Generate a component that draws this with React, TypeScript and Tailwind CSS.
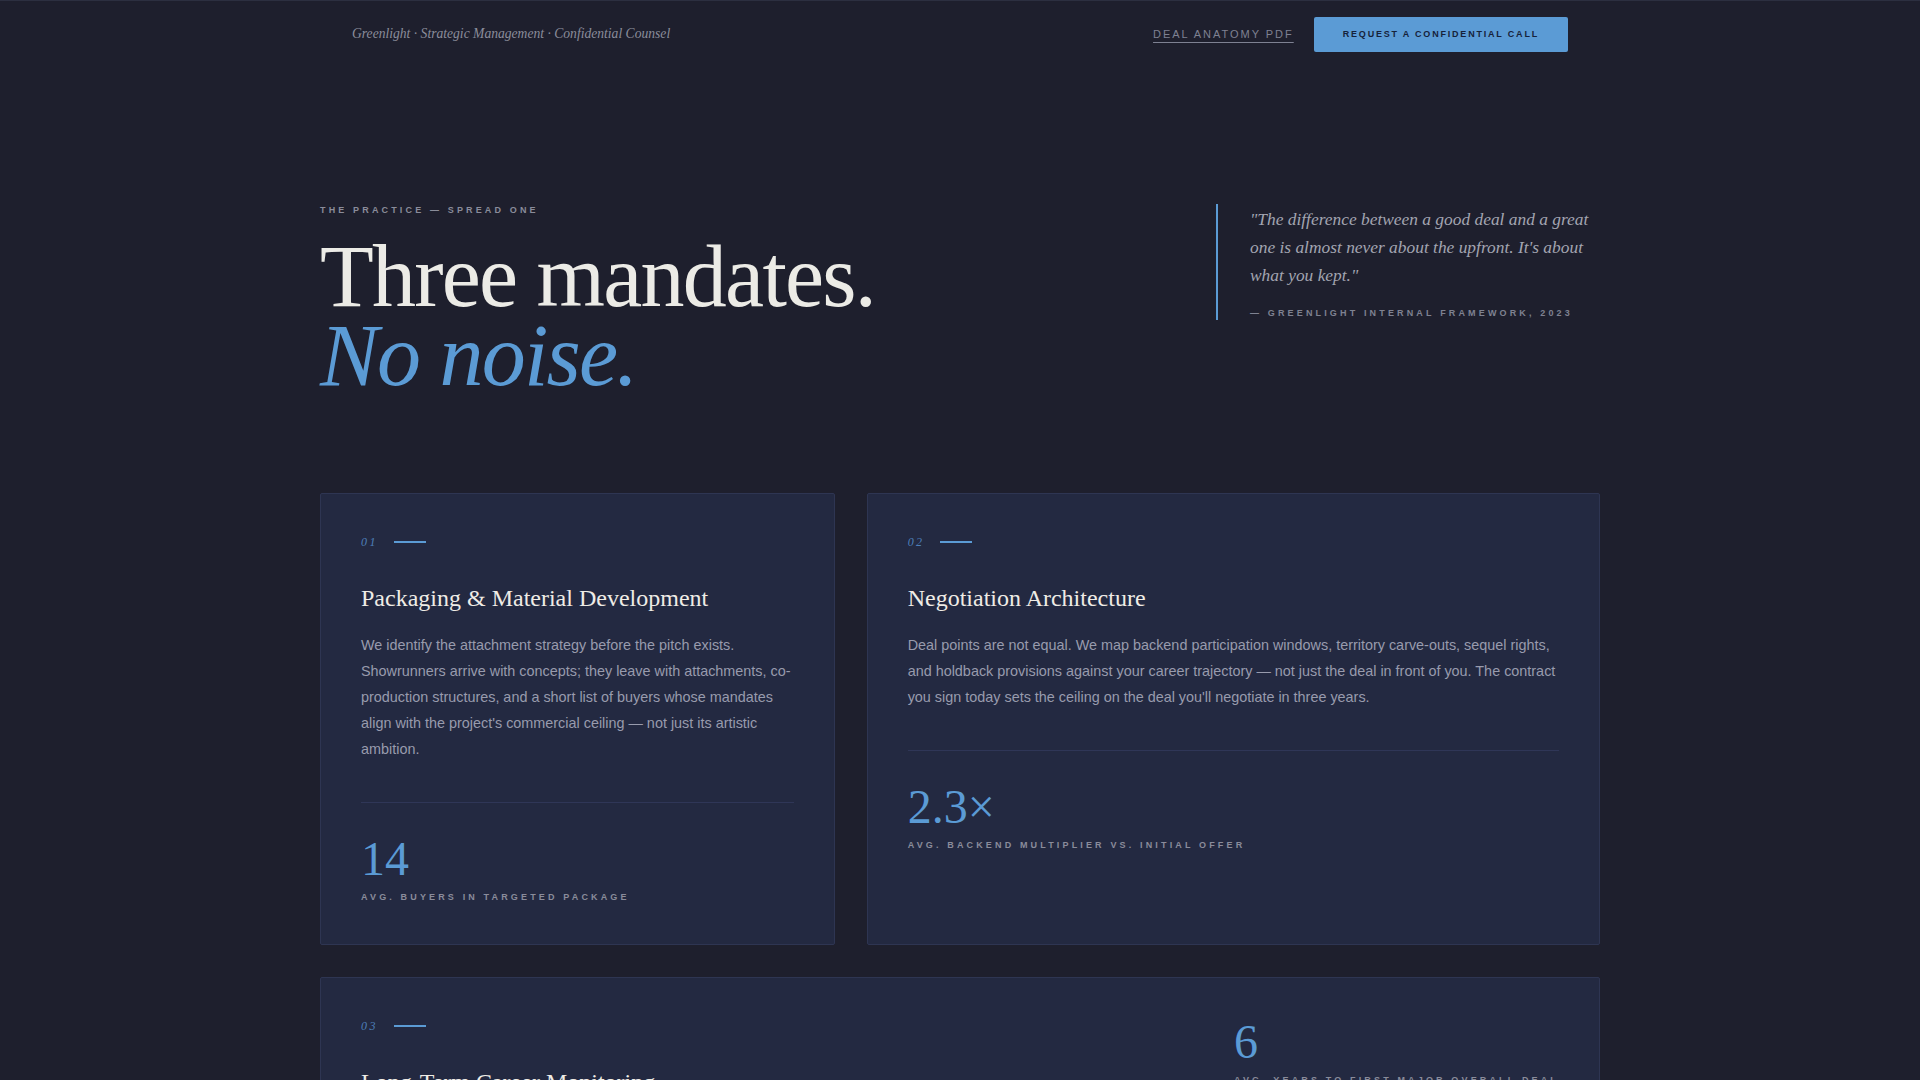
import React from 'react'

const serif = "font-['Liberation_Serif','Times_New_Roman',serif]"
const sans = "font-['Liberation_Sans',Arial,sans-serif]"

interface Mandate {
  index: string
  title: string
  body: string
  stat: string
  statLabel: string
  span: string
}

const mandates: Mandate[] = [
  {
    index: '01',
    title: 'Packaging & Material Development',
    body: "We identify the attachment strategy before the pitch exists. Showrunners arrive with concepts; they leave with attachments, co-production structures, and a short list of buyers whose mandates align with the project's commercial ceiling — not just its artistic ambition.",
    stat: '14',
    statLabel: 'Avg. buyers in targeted package',
    span: 'col-span-5',
  },
  {
    index: '02',
    title: 'Negotiation Architecture',
    body: "Deal points are not equal. We map backend participation windows, territory carve-outs, sequel rights, and holdback provisions against your career trajectory — not just the deal in front of you. The contract you sign today sets the ceiling on the deal you'll negotiate in three years.",
    stat: '2.3×',
    statLabel: 'Avg. backend multiplier vs. initial offer',
    span: 'col-span-7',
  },
]

function IndexMark({ index }: { index: string }) {
  return (
    <div className="flex items-center gap-4 mb-8">
      <span className={`${serif} italic text-[12px] leading-4 tracking-[0.2em] text-[#4d7fb9]`}>{index}</span>
      <span className="h-[2px] w-8 bg-[#5b9bd5]" />
    </div>
  )
}

function Stat({ value, label }: { value: string; label: string }) {
  return (
    <div>
      <div className={`${serif} text-[48px] leading-none text-[#5b9bd5]`}>{value}</div>
      <div className="mt-2 text-[9px] leading-[13px] font-bold uppercase tracking-[0.35em] text-[#8a8c9b]">{label}</div>
    </div>
  )
}

function MandateCard({ mandate }: { mandate: Mandate }) {
  return (
    <div className={`${mandate.span} bg-[#232941] border border-[#2e3552] rounded-[2px] p-10`}>
      <IndexMark index={mandate.index} />
      <h3 className={`${serif} text-[24px] leading-8 font-normal text-[#efece6] mb-[18px]`}>{mandate.title}</h3>
      <p className="text-[14.4px] leading-[26px] text-[#989bad]">{mandate.body}</p>
      <div className="mt-10 border-t border-[#2f3657] pt-8">
        <Stat value={mandate.stat} label={mandate.statLabel} />
      </div>
    </div>
  )
}

export default function App() {
  return (
    <div className={`${sans} min-h-screen bg-[#1e1f2d] border-t border-[#2c2f40] pb-24`}>
      {/* Top bar */}
      <header className="mx-auto max-w-[1280px] px-8 py-4 flex items-center justify-between">
        <p className={`${serif} italic text-[13.6px] text-[#8b8d9b]`}>
          Greenlight · Strategic Management · Confidential Counsel
        </p>
        <div className="flex items-center gap-5">
          <a href="#" className="text-[11px] uppercase tracking-[0.18em] text-[#7e8192] underline underline-offset-4 decoration-[#7e8192]">
            Deal Anatomy PDF
          </a>
          <button className="bg-[#5b9bd5] rounded-[2px] px-[29px] py-3 text-[9px] leading-[11px] font-bold uppercase tracking-[0.2em] text-[#16223a]">
            Request a Confidential Call
          </button>
        </div>
      </header>

      <main className="mx-auto max-w-[1280px] pt-[136px]">
        {/* Spread heading */}
        <section className="flex items-start justify-between mb-[98px]">
          <div>
            <p className="text-[9px] leading-[13px] font-bold uppercase tracking-[0.35em] text-[#8a8c9a] mb-5">
              The Practice — Spread One
            </p>
            <h1 className={`${serif} text-[88px] leading-[0.9] tracking-[-0.02em] font-normal text-[#ecebe6]`}>
              <span className="block">Three mandates.</span>
              <em className="block text-[#5b9bd5]">No noise.</em>
            </h1>
          </div>
          <blockquote className="w-96 border-l-2 border-[#5b9bd5] pl-8 pt-px">
            <p className={`${serif} italic text-[17.4px] leading-7 text-[#a3a5b1]`}>
              "The difference between a good deal and a great one is almost never about the upfront. It's about what you kept."
            </p>
            <p className="mt-[18px] text-[9px] leading-[13px] font-bold uppercase tracking-[0.35em] text-[#7f8291]">
              — Greenlight Internal Framework, 2023
            </p>
          </blockquote>
        </section>

        {/* Mandates */}
        <div className="grid grid-cols-12 gap-8">
          {mandates.map((m) => (
            <MandateCard key={m.index} mandate={m} />
          ))}

          <div className="col-span-12 bg-[#232941] border border-[#2e3552] rounded-[2px] p-10 flex items-start justify-between gap-16">
            <div className="max-w-[640px]">
              <IndexMark index="03" />
              <h3 className={`${serif} text-[24px] leading-8 font-normal text-[#efece6] mb-[18px]`}>Long-Term Career Monitoring</h3>
              <p className="text-[14.4px] leading-[26px] text-[#989bad]">
                We plan the arc, not the next job. Every booking, rewrite and producing credit is weighed against where it
                positions you for an overall deal — and what it quietly rules out along the way.
              </p>
            </div>
            <Stat value="6" label="Avg. years to first major overall deal" />
          </div>
        </div>
      </main>
    </div>
  )
}
